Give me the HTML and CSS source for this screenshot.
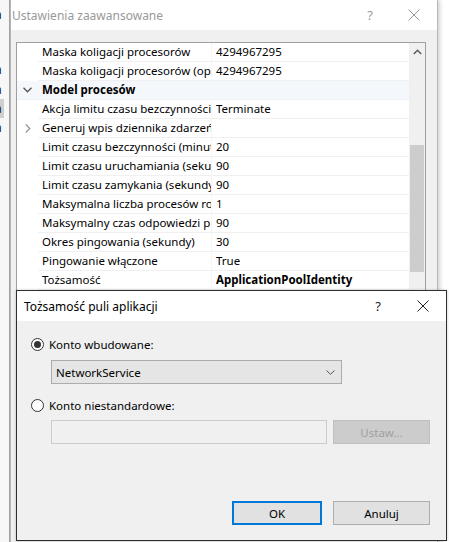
FILE: index.html
```html
<!DOCTYPE html>
<html lang="pl">
<head>
<meta charset="utf-8">
<title>Tożsamość puli aplikacji</title>
<link rel="stylesheet" href="styles.css">
</head>
<body>
<div class="desktop">
  <div class="bgwin">
    <div class="bgline l1">a</div>
    <div class="bgline l2">a</div>
    <div class="bgline l3">a</div>
    <div class="bgline l4 sel">a</div>
    <div class="bgline l5">a</div>
  </div>

  <div class="win back">
    <div class="titlebar inactive">
      <span class="title">Ustawienia zaawansowane</span>
      <span class="tbtn help">?</span>
      <span class="tbtn close"><svg width="12" height="12" viewBox="0 0 12 12"><path d="M0.5 0.5L11.5 11.5M11.5 0.5L0.5 11.5" stroke="#9a9a9a" stroke-width="1" fill="none"/></svg></span>
    </div>
    <div class="backbody">
      <div class="grid">
        <div class="rows">
          <div class="row"><span class="gut"></span><span class="name">Maska koligacji procesorów</span><span class="val">4294967295</span></div>
          <div class="row"><span class="gut"></span><span class="name">Maska koligacji procesorów (opcja)</span><span class="val">4294967295</span></div>
          <div class="row cat"><span class="gut"><svg width="9" height="6" viewBox="0 0 9 6"><path d="M0.5 0.8L4.5 4.8L8.5 0.8" stroke="#555" stroke-width="1.3" fill="none"/></svg></span><span class="catname">Model procesów</span></div>
          <div class="row"><span class="gut"></span><span class="name">Akcja limitu czasu bezczynności</span><span class="val">Terminate</span></div>
          <div class="row"><span class="gut"><svg width="6" height="9" viewBox="0 0 6 9"><path d="M0.8 0.5L4.8 4.5L0.8 8.5" stroke="#999" stroke-width="1.3" fill="none"/></svg></span><span class="name">Generuj wpis dziennika zdarzeń dla</span><span class="val"></span></div>
          <div class="row"><span class="gut"></span><span class="name">Limit czasu bezczynności (minuty)</span><span class="val">20</span></div>
          <div class="row"><span class="gut"></span><span class="name">Limit czasu uruchamiania (sekundy)</span><span class="val">90</span></div>
          <div class="row"><span class="gut"></span><span class="name">Limit czasu zamykania (sekundy)</span><span class="val">90</span></div>
          <div class="row"><span class="gut"></span><span class="name">Maksymalna liczba procesów roboczych</span><span class="val">1</span></div>
          <div class="row"><span class="gut"></span><span class="name">Maksymalny czas odpowiedzi pingu</span><span class="val">90</span></div>
          <div class="row"><span class="gut"></span><span class="name">Okres pingowania (sekundy)</span><span class="val">30</span></div>
          <div class="row"><span class="gut"></span><span class="name">Pingowanie włączone</span><span class="val">True</span></div>
          <div class="row"><span class="gut"></span><span class="name">Tożsamość</span><span class="val bold">ApplicationPoolIdentity</span></div>
        </div>
        <div class="scrollbar">
          <div class="sarrow"><svg width="9" height="6" viewBox="0 0 9 6"><path d="M0.8 5L4.5 1.3L8.2 5" stroke="#606060" stroke-width="1.6" fill="none"/></svg></div>
          <div class="strack"><div class="sthumb"></div></div>
        </div>
      </div>
    </div>
  </div>

  <div class="win front">
    <div class="titlebar">
      <span class="title">Tożsamość puli aplikacji</span>
      <span class="tbtn help dark">?</span>
      <span class="tbtn close"><svg width="12" height="12" viewBox="0 0 12 12"><path d="M0.5 0.5L11.5 11.5M11.5 0.5L0.5 11.5" stroke="#222" stroke-width="1" fill="none"/></svg></span>
    </div>
    <div class="frontbody">
      <label class="radio"><span class="rcirc on"><span class="rdot"></span></span><span>Konto wbudowane:</span></label>
      <div class="selectbox"><span>NetworkService</span><svg width="9" height="5" viewBox="0 0 9 5"><path d="M0.5 0.5L4.5 4.3L8.5 0.5" stroke="#555" stroke-width="1" fill="none"/></svg></div>
      <label class="radio r2"><span class="rcirc"></span><span>Konto niestandardowe:</span></label>
      <div class="customrow">
        <div class="textbox"></div>
        <div class="btn disabled">Ustaw...</div>
      </div>
      <div class="footer">
        <div class="btn ok">OK</div>
        <div class="btn cancel">Anuluj</div>
      </div>
    </div>
  </div>
</div>
</body>
</html>
```

FILE: styles.css
```css
* { box-sizing: border-box; }
html, body { margin: 0; padding: 0; }
body {
  background: #ffffff;
  font-family: "Noto Sans", "Open Sans", sans-serif;
  font-size: 11.5px;
  color: #000;
}
.desktop {
  position: relative;
  width: 449px;
  height: 542px;
  overflow: hidden;
  background: #ffffff;
}
.bgwin {
  position: absolute;
  left: 0;
  top: 0;
  width: 10px;
  height: 542px;
  background: #f7f7f7;
  border-right: 1px solid #a8a8a8;
  overflow: hidden;
}
.bgline {
  position: absolute;
  left: -5px;
  height: 19px;
  line-height: 19px;
  font-size: 12px;
  color: #222;
  width: 9px;
}
.bgline.sel { background: #cfcfcf; }
.l1 { top: 5px; }
.l2 { top: 60px; }
.l3 { top: 80px; }
.l4 { top: 99px; }
.l5 { top: 118px; }

.win {
  position: absolute;
  background: #f0f0f0;
}
.back {
  left: 10px;
  top: 0;
  width: 428px;
  height: 560px;
  border-left: 1px solid #b5b5b5;
  border-right: 1px solid #b8b8b8;
  box-shadow: 2px 0 4px rgba(0,0,0,0.18);
}
.titlebar {
  height: 30px;
  background: #ffffff;
  display: flex;
  align-items: center;
  position: relative;
}
.title { padding-left: 1px; font-size: 12px; }
.inactive .title { color: #999999; }
.tbtn {
  position: absolute;
  top: 0;
  height: 30px;
  display: flex;
  align-items: center;
  justify-content: center;
  color: #9a9a9a;
  font-size: 13px;
}
.back .help { left: 354px; width: 10px; }
.back .close { left: 397px; width: 12px; }

.backbody {
  padding: 12px 0 0 5px;
}
.grid {
  width: 410px;
  height: 300px;
  border: 1px solid #a0a0a0;
  background: #ffffff;
  display: flex;
}
.rows {
  width: 392px;
  display: flex;
  flex-direction: column;
}
.row {
  height: 19px;
  display: flex;
  align-items: stretch;
  line-height: 18px;
}
.gut {
  width: 21px;
  flex: none;
  display: flex;
  align-items: center;
  justify-content: center;
}
.name {
  width: 174px;
  flex: none;
  padding-left: 4px;
  white-space: nowrap;
  overflow: hidden;
  border-bottom: 1px solid #f0f0f0;
  border-right: 1px solid #f5f5f5;
}
.val {
  flex: 1;
  padding-left: 4px;
  white-space: nowrap;
  overflow: hidden;
  border-bottom: 1px solid #f0f0f0;
}
.bold { font-weight: 700; }
.cat {
  background: #f4f7fb;
  border-bottom: 1px solid #edf0f4;
}
.catname {
  padding-left: 4px;
  font-weight: 700;
}
.scrollbar {
  width: 16px;
  background: #f0f0f0;
  display: flex;
  flex-direction: column;
}
.sarrow {
  height: 17px;
  display: flex;
  align-items: center;
  justify-content: center;
}
.strack { flex: 1; padding-top: 85px; }
.sthumb {
  margin: 0 1px;
  height: 127px;
  background: #cdcdcd;
}

.front {
  left: 16px;
  top: 290px;
  width: 431px;
  height: 251px;
  border: 1px solid #2e2e2e;
  box-shadow: 0 0 3px rgba(0,0,0,0.2);
  display: flex;
  flex-direction: column;
}
.front .titlebar { padding-left: 6px; }
.front .help { left: 356px; width: 10px; color: #222; }
.front .close { left: 400px; width: 12px; }

.frontbody {
  flex: 1;
  display: flex;
  flex-direction: column;
  padding: 15px 16px 0 14px;
}
.radio {
  display: flex;
  align-items: center;
  gap: 5px;
  height: 16px;
}
.rcirc {
  width: 13px;
  height: 13px;
  border: 1px solid #333;
  border-radius: 50%;
  background: #fff;
  display: flex;
  align-items: center;
  justify-content: center;
}
.rdot {
  width: 7px;
  height: 7px;
  border-radius: 50%;
  background: #333;
}
.selectbox {
  margin: 8px 0 0 20px;
  width: 291px;
  height: 24px;
  background: #e5e5e5;
  border: 1px solid #acacac;
  display: flex;
  align-items: center;
  justify-content: space-between;
  padding: 0 6px 0 4px;
}
.r2 { margin-top: 13px; }
.customrow {
  margin: 7px 0 0 20px;
  display: flex;
  gap: 6px;
}
.textbox {
  width: 276px;
  height: 24px;
  background: #f0f0f0;
  border: 1px solid #cccccc;
}
.btn {
  height: 24px;
  display: flex;
  align-items: center;
  justify-content: center;
  border: 1px solid #adadad;
  background: #e1e1e1;
}
.btn.disabled {
  width: 97px;
  background: #cccccc;
  border-color: #bfbfbf;
  color: #a0a0a0;
}
.footer {
  margin-top: 57px;
  display: flex;
  justify-content: flex-end;
  gap: 11px;
}
.btn.ok {
  width: 90px;
  border: 2px solid #0078d7;
}
.btn.cancel { width: 97px; }
```
